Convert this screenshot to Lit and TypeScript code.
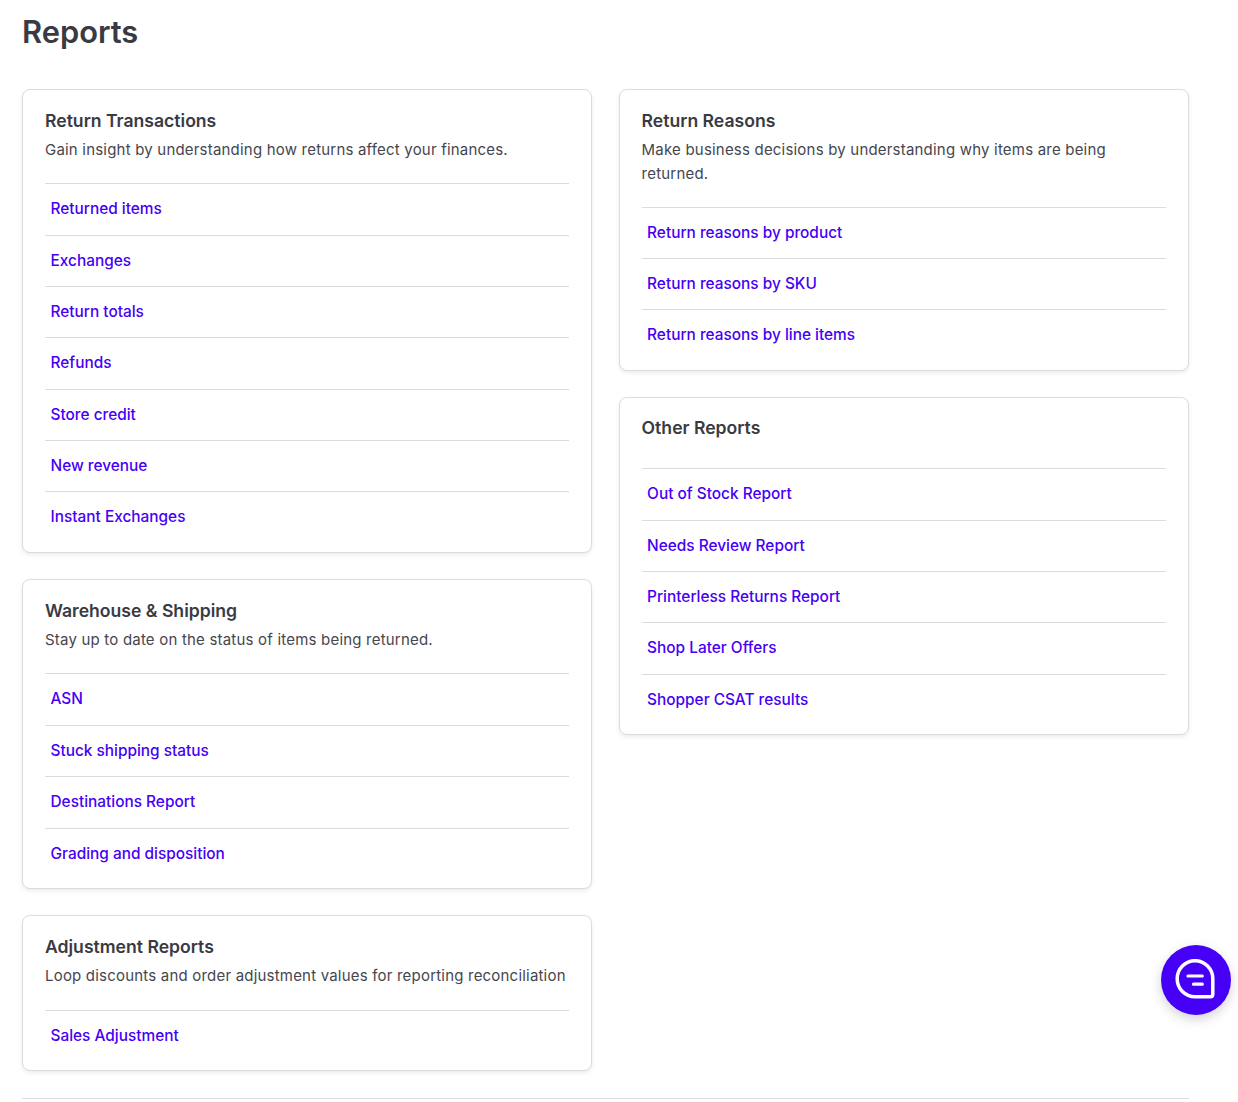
import { LitElement, html, css } from "lit";
import { customElement } from "lit/decorators.js";

type Card = { title: string; desc?: string; links: string[] };

const left: Card[] = [
  { title: "Return Transactions", desc: "Gain insight by understanding how returns affect your finances.", links: ["Returned items", "Exchanges", "Return totals", "Refunds", "Store credit", "New revenue", "Instant Exchanges"] },
  { title: "Warehouse & Shipping", desc: "Stay up to date on the status of items being returned.", links: ["ASN", "Stuck shipping status", "Destinations Report", "Grading and disposition"] },
  { title: "Adjustment Reports", desc: "Loop discounts and order adjustment values for reporting reconciliation", links: ["Sales Adjustment"] },
];
const right: Card[] = [
  { title: "Return Reasons", desc: "Make business decisions by understanding why items are being returned.", links: ["Return reasons by product", "Return reasons by SKU", "Return reasons by line items"] },
  { title: "Other Reports", links: ["Out of Stock Report", "Needs Review Report", "Printerless Returns Report", "Shop Later Offers", "Shopper CSAT results"] },
];

@customElement("app-root")
export class AppRoot extends LitElement {
  static styles = css`
    :host { display: block; height: 1102px; overflow: hidden; background: #fff; font-family: Inter, "Liberation Sans", sans-serif; color: #3a3a42; position: relative; }
    .page { padding: 0 49px 0 22px; }
    h1 { margin: 0; padding-top: 13px; height: 89px; box-sizing: border-box; font-size: 30.8px; line-height: 38px; font-weight: 600; color: #393a42; }
    .cols { display: grid; grid-template-columns: 570px 570px; column-gap: 26.6px; align-items: start; }
    .col { display: flex; flex-direction: column; gap: 26.3px; }
    .card { border: 1px solid #dcdcdf; border-radius: 8px; background: #fff; box-shadow: 0 2px 4px rgba(0,0,0,.08); padding: 19px 22px 9px; }
    h2 { margin: 0; font-size: 17.6px; line-height: 24px; font-weight: 600; color: #393a42; }
    p { margin: 5.3px 0 0; font-size: 15px; line-height: 23.4px; letter-spacing: .2px; color: #45464e; }
    .head { padding-bottom: 21.7px; }
    .head.nodesc { padding-bottom: 28.3px; }
    .head.nodesc h2 { margin-top: -1px; }
    a { display: block; height: 51.35px; line-height: 50.8px; box-sizing: border-box; border-top: 1px solid #dcdcdf; padding-left: 5.5px; font-size: 15.4px; font-weight: 500; color: #4600f5; text-decoration: none; }
    hr { border: 0; border-top: 1px solid #dcdcdf; margin: 27px 0 0; }
    .fab { position: absolute; left: 1161px; top: 945px; width: 70px; height: 70px; border-radius: 50%; background: #4600f5; box-shadow: 0 4px 12px rgba(0,0,0,.18); display: flex; align-items: center; justify-content: center; }
  `;

  card(c: Card) {
    return html`<section class="card">
      <div class="head ${c.desc ? "" : "nodesc"}">
        <h2>${c.title}</h2>
        ${c.desc ? html`<p>${c.desc}</p>` : ""}
      </div>
      ${c.links.map((l) => html`<a href="#">${l}</a>`)}
    </section>`;
  }

  render() {
    return html`<div class="page">
        <h1>Reports</h1>
        <div class="cols">
          <div class="col">${left.map((c) => this.card(c))}</div>
          <div class="col">${right.map((c) => this.card(c))}</div>
        </div>
        <hr />
      </div>
      <div class="fab">
        <svg width="42" height="42" viewBox="0 0 42 42" fill="none" stroke="#fff" stroke-linecap="round" stroke-linejoin="round">
          <path d="M20 1.7C10.2 1.7 2.2 9.7 2.2 19.7S10.2 37.8 20 37.8H35.3C36.7 37.8 37.8 36.7 37.8 35.3V19.7C37.8 9.7 29.8 1.7 20 1.7Z" stroke-width="3.5" />
          <path d="M13 17H27.3M18.5 25.2H27.3" stroke-width="3.2" />
        </svg>
      </div>`;
  }
}
